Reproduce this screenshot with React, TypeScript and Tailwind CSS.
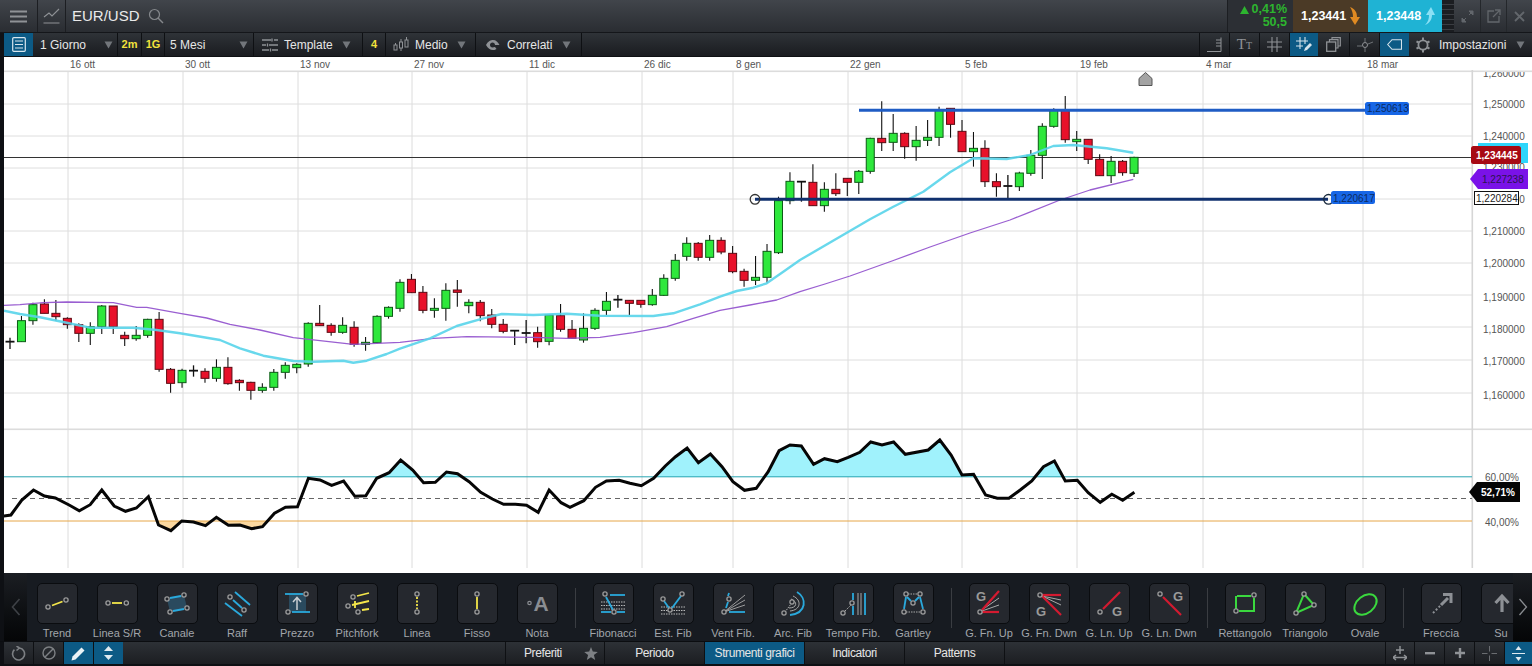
import React from "react";

type C = [string, number, number, number, number];
const seg8: C[] = [
  ["d",155,155,143,177],["g",92,155,78,155],["g",44,92,38,104],["r",42,70,28,70],["r",70,80,30,92],["r",85,104,82,116],["r",104,130,100,156],["g",110,130,97,165],["g",48,110,45,132],["r",48,110,48,132],["r",136,146,125,168],["g",136,146,108,152],["g",88,136,86,143],["r",88,238,66,245],["r",238,280,234,308],["g",241,278,236,293],["d",242,242,226,260],["r",244,265,235,278],["g",232,265,208,275],["r",232,281,202,284],["r",271,278,268,302],["r",277,301,275,329],["g",292,301,280,308],["g",247,292,237,302],["g",226,247,217,266],["g",223,233,220,250],["g",100,222,97,230],["r",100,107,45,108],["r",106,127,100,137],["g",106,127,82,131],["r",112,163,94,170],["g",157,163,141,182],["g",79,158,76,160],["g",52,79,49,86],
];
const seg9: C[] = [
  ["g",187,265,178,275],["r",178,218,162,218],["r",217,271,198,280],["g",265,271,235,293],["g",211,265,190,302],["r",210,217,180,260],["g",247,257,238,280],["r",247,287,240,304],["r",285,313,267,325],["r",313,334,297,340],["d",332,332,332,375],["d",339,339,300,370],["r",338,365,320,383],["g",285,364,285,376],["r",287,328,252,335],["r",328,355,300,356],["g",325,360,280,368],["g",271,325,265,330],["g",244,271,216,285],["d",239,239,225,263],["r",241,250,241,285],["r",241,253,241,263],["g",226,254,207,257],["g",175,226,163,228],["g",121,175,102,182],["g",70,109,52,122],["r",70,112,66,122],["g",61,112,45,122],["r",61,96,52,103],["r",100,155,78,160],["r",154,181,146,200],["g",172,181,108,195],["g",94,172,72,188],
];
const seg6: C[] = [
  ["g",332,488,320,492],["g",274,332,247,343],["d",275,275,275,335],["r",277,347,223,347],["g",298,347,277,365],["r",298,311,250,318],["r",265,277,265,318],["g",244,277,240,312],["g",145,244,143,251],["r",145,158,34,183],["g",130,157,72,183],["r",130,170,127,206],["g",151,170,108,212],["g",142,151,90,168],["g",60,142,50,168],["r",55,103,55,143],["r",124,185,90,185],["g",175,185,126,230],["r",175,275,151,291],["r",275,290,250,320],["d",288,288,255,325],["g",249,290,245,303],["g",196,250,180,257],["g",109,196,100,267],["g",60,109,55,113],["r",60,149,18,158],["g",148,155,123,183],["r",148,208,148,222],["r",208,257,193,257],["g",214,257,198,279],["r",214,248,210,257],["g",202,250,200,261],
];
const candles: C[] = [
  ...seg8.map((c): C => [c[0], 290 + c[1] / 3, 290 + c[2] / 3, 290 + c[3] / 3, 290 + c[4] / 3]),
  ...seg9.map((c): C => [c[0], 220 + c[1] / 3, 220 + c[2] / 3, 220 + c[3] / 3, 220 + c[4] / 3]),
  ...seg6.map((c): C => [c[0], 90 + c[1] / 3, 90 + c[2] / 3, 90 + c[3] / 3, 90 + c[4] / 3]),
];

const conv = (a: number[], ox: number, oy: number, sx = 3) => {
  const out: string[] = [];
  for (let i = 0; i < a.length; i += 2) out.push(`${(ox + a[i] / sx).toFixed(1)},${(oy + a[i + 1] / 3).toFixed(1)}`);
  return out;
};
const cyan = [
  ...conv([12,62,60,72,120,82,200,98,270,113,400,113,470,120,540,130,660,150,720,175,790,197,880,213,940,215,1030,212,1060,218,1100,212,1160,192,1200,176],0,290),
  ...conv([90,355,170,318,250,295,305,282,400,285,500,281,600,287,760,288,820,280,900,253,960,230,1010,213,1060,203,1100,190,1150,155,1200,120],400,220),
  ...conv([390,388,460,350,550,305,630,247,700,205,800,207,870,195,940,168,1000,165,1100,175,1180,188],740,90),
].join(" ");
const purple = [
  ...conv([12,46,60,44,130,38,200,36,340,38,410,52,440,52,540,70,620,84,690,103,780,120,880,143,960,152,1060,163,1200,157],0,290),
  ...conv([100,355,200,350,400,352,500,355,600,352,700,338,800,320,880,295,960,271,1050,255,1130,240,1200,215],400,220),
  "825,284","850,276","892,261","930,247","970,233",
  ...conv([810,390,860,370,960,330,1050,300,1180,268],740,90),
].join(" ");
const rsiPts = [
  ...conv([10,258,30,255,60,210,92,180,122,198,152,204,190,225,218,242,248,224,280,180,314,228,345,244,375,234,408,200,436,285,470,302,500,273,532,276,565,287,595,262,628,286,660,285,692,296,722,290,755,250,785,232,818,230,848,145,880,150,912,166,945,153,976,199,1006,197,1036,145,1070,128,1102,90,1135,120,1165,158,1197,157,1228,126,1258,131,1290,155,1322,187,1354,207,1385,223,1417,223,1448,226,1480,247,1510,180,1543,218],0,430,2.75),
  ...conv([0,232,38,212,70,172,100,153,135,151,165,160,196,167,230,145,262,108,290,80,322,54,353,98,386,72,418,110,448,155,480,181,512,175,545,125,575,62,605,45,636,48,670,103,700,86,735,95,765,82,797,67,827,36,858,45,890,36,922,73,985,60,1017,30,1048,75,1078,135,1110,133,1143,195,1175,205,1207,205,1238,180,1270,153,1302,110,1332,93,1362,153,1395,151,1425,188,1458,217,1490,193,1520,211,1552,187],570,430,2.75),
];
const rsi = rsiPts.join(" ");

const vGrid = [68, 183, 298, 412, 527, 642, 733, 848, 962, 1077, 1203, 1363];
const hGrid = [104, 136, 168, 199, 231, 263, 295, 327, 360, 393];
const dates: [number, string][] = [[70,"16 ott"],[185,"30 ott"],[300,"13 nov"],[414,"27 nov"],[529,"11 dic"],[644,"26 dic"],[736,"8 gen"],[850,"22 gen"],[965,"5 feb"],[1080,"19 feb"],[1206,"4 mar"],[1367,"18 mar"]];
const prices: [number, string][] = [[77,"1,260000"],[108,"1,250000"],[140,"1,240000"],[171,"1,230000"],[203,"1,220000"],[235,"1,210000"],[267,"1,200000"],[301,"1,190000"],[333,"1,180000"],[365,"1,170000"],[399,"1,160000"]];
const F = "'Liberation Sans', Arial, sans-serif";

function Chart() {
  return (
    <svg viewBox="4 57 1528 516" className="block w-[1528px] h-[516px] bg-white">
      <defs>
        <clipPath id="upper"><rect x="0" y="430" width="1472" height="47" /></clipPath>
        <clipPath id="lower"><rect x="0" y="521" width="1472" height="40" /></clipPath>
      </defs>
      {vGrid.map((x) => <line key={x} x1={x} x2={x} y1="70" y2="568" stroke="#dcdcdc" strokeWidth="1" />)}
      {hGrid.map((y) => <line key={y} x1="4" x2="1472" y1={y} y2={y} stroke="#dedede" strokeWidth="1" />)}
      <g fontSize="10" fill="#555" fontFamily={F}>
        {prices.map(([y, t]) => <text key={t} x="1483" y={y}>{t}</text>)}
        <text x="1485" y="481">60,00%</text>
        <text x="1485" y="526">40,00%</text>
      </g>
      <rect x="4" y="57" width="1528" height="14" fill="#fff" />
      <rect x="4" y="70.5" width="1528" height="1.6" fill="#dcdcdc" />
      <rect x="4" y="428.5" width="1528" height="1.6" fill="#dcdcdc" />
      <rect x="1471.5" y="70" width="1.6" height="498" fill="#d6d6d6" />
      <g fontSize="10" fill="#555" fontFamily={F}>
        {dates.map(([x, t]) => <text key={t} x={x} y="68">{t}</text>)}
      </g>
      <line x1="4" x2="1472" y1="157.5" y2="157.5" stroke="#333" strokeWidth="1" />
      {candles.map((c, i) => {
        const x = 10 + 11.47 * i;
        const dark = c[0] === "g" ? "#0c5a16" : "#5a0a12";
        if (c[0] === "d") {
          return (
            <g key={i} stroke="#111" strokeWidth="1.3">
              <line x1={x} x2={x} y1={c[3]} y2={c[4]} />
              <line x1={x - 4.5} x2={x + 4.5} y1={c[1]} y2={c[1]} strokeWidth="1.8" />
            </g>
          );
        }
        return (
          <g key={i}>
            <line x1={x} x2={x} y1={c[3]} y2={c[4]} stroke="#111" strokeWidth="1.1" />
            <rect x={x - 4} y={c[1]} width="8" height={Math.max(c[2] - c[1], 1)} fill={c[0] === "g" ? "#2ee83c" : "#e8112a"} stroke={dark} strokeWidth="1" />
          </g>
        );
      })}
      <polyline points={purple} fill="none" stroke="#9556cf" strokeWidth="1.3" strokeLinejoin="round" opacity="0.95" />
      <polyline points={cyan} fill="none" stroke="#58d4ea" strokeWidth="2.4" strokeLinejoin="round" opacity="0.9" />
      <line x1="859" x2="1365" y1="110.3" y2="110.3" stroke="#1f5cc4" strokeWidth="3" />
      <line x1="755" x2="1328" y1="199.3" y2="199.3" stroke="#10306e" strokeWidth="3" />
      <circle cx="755" cy="199.3" r="4.8" fill="none" stroke="#333" strokeWidth="1.3" />
      <circle cx="1328.5" cy="199.3" r="4.8" fill="none" stroke="#1a2a3c" strokeWidth="1.3" />
      <rect x="1365" y="102" width="44" height="13" rx="2.5" fill="#1766e6" />
      <text x="1367" y="112.3" fontSize="10" fill="#0c2b5f" fontFamily={F}>1,250613</text>
      <rect x="1331" y="191" width="44" height="13" rx="2.5" fill="#1766e6" />
      <text x="1333" y="201.5" fontSize="10" fill="#0c2b5f" fontFamily={F}>1,220617</text>
      <polygon points="1145.5,72.5 1152,78.5 1152,85.5 1139,85.5 1139,78.5" fill="#a3a3a3" stroke="#555" strokeWidth="1" />
      <rect x="1478" y="143" width="50" height="20" fill="#2ed5fb" />
      <rect x="1471" y="146" width="50" height="18" rx="2.5" fill="#a70a14" />
      <text x="1476" y="159" fontSize="10" fontWeight="700" fill="#fff" fontFamily={F}>1,234445</text>
      <polygon points="1470,179 1478,169 1528,169 1528,189 1478,189" fill="#7a12e8" />
      <text x="1482" y="183" fontSize="10" fill="#2c1450" fontFamily={F}>1,227238</text>
      <rect x="1474.5" y="191.5" width="44" height="13" fill="#fff" stroke="#111" strokeWidth="1" />
      <text x="1476" y="202" fontSize="10" fill="#222" fontFamily={F}>1,220284</text>
      <polygon points={`4,521 ${rsi} 1134,521`} fill="#fbd8a0" clipPath="url(#lower)" />
      <polygon points={`4,477 ${rsi} 1134,477`} fill="#a0f2fc" clipPath="url(#upper)" />
      <line x1="4" x2="1472" y1="476.8" y2="476.8" stroke="#2aa5b2" strokeWidth="1" />
      <line x1="4" x2="1472" y1="521" y2="521" stroke="#e6a648" strokeWidth="1" />
      <line x1="12" x2="1472" y1="498.5" y2="498.5" stroke="#666" strokeWidth="1" strokeDasharray="5 4" />
      <polyline points={rsi} fill="none" stroke="#060606" strokeWidth="3" strokeLinejoin="miter" />
      <polygon points="1469,492 1477,482 1520,482 1520,502 1477,502" fill="#050505" />
      <text x="1481" y="496" fontSize="10" fontWeight="700" fill="#fff" fontFamily={F}>52,71%</text>
    </svg>
  );
}

const Tri = ({ className = "" }: { className?: string }) => (
  <svg viewBox="0 0 9 8" className={`w-[9px] h-[8px] ${className}`}><polygon points="0.5,0.5 8.5,0.5 4.5,7.5" fill="#72767b" /></svg>
);

const Dot = ({ x, y, r = 2.1 }: { x: number; y: number; r?: number }) => (
  <circle cx={x} cy={y} r={r} fill="#24272d" stroke="#9c9c9c" strokeWidth="1.3" />
);
const Y = "#f4e64a", B = "#2aa9dc", R = "#d41a30", G = "#3ad83e", GR = "#a8a8a8";
const L = ({ a, b, c = B, w = 1.8, d }: { a: number[]; b: number[]; c?: string; w?: number; d?: string }) => (
  <line x1={a[0]} y1={a[1]} x2={b[0]} y2={b[1]} stroke={c} strokeWidth={w} strokeDasharray={d} />
);
const GLet = ({ x, y }: { x: number; y: number }) => (
  <text x={x} y={y} fontSize="13" fontWeight="700" fill="#9a9a9a" textAnchor="middle" fontFamily={F}>G</text>
);

const tools: Record<string, React.ReactNode> = {
  "Trend": <><L a={[15,22.5]} b={[25.5,18.5]} c={Y} /><Dot x={11} y={24} /><Dot x={29} y={17} /></>,
  "Linea S/R": <><L a={[15,20]} b={[25,20]} c={Y} /><Dot x={11} y={20} /><Dot x={29.3} y={20} /></>,
  "Canale": <><polygon points="10,16 27,12 30,25 13,29" fill="#2a4a5e" /><L a={[13,15]} b={[24,13]} /><L a={[16,28]} b={[27,26]} /><Dot x={10} y={16} /><Dot x={27} y={12} /><Dot x={13} y={29} /><Dot x={30} y={25} /></>,
  "Raff": <><L a={[18,9]} b={[33,22]} /><L a={[16,17]} b={[25,25]} /><L a={[8,20]} b={[25,33]} /><Dot x={13} y={14} /><Dot x={27} y={27} /></>,
  "Prezzo": <><rect x="12" y="11" width="17" height="18" fill="#2a4a5e" /><L a={[8,11]} b={[26,11]} /><L a={[15,29]} b={[33,29]} /><path d="M20 27 V15 M16 19 L20 14.5 L24 19" fill="none" stroke="#c8ced2" strokeWidth="1.5" /><Dot x={29} y={11} /><Dot x={11} y={29} /></>,
  "Pitchfork": <><L a={[20,13]} b={[32,10]} c={Y} /><L a={[15,22]} b={[32,18]} c={Y} /><L a={[25,27]} b={[32,26]} c={Y} /><L a={[18,18]} b={[18,25]} c={Y} /><Dot x={16} y={14} /><Dot x={11} y={23} /><Dot x={21} y={29} /></>,
  "Linea": <><L a={[20,14]} b={[20,26]} c={Y} d="2 1.5" /><Dot x={20} y={11} /><Dot x={20} y={29} /></>,
  "Fisso": <><L a={[20,14]} b={[20,26]} c={Y} /><Dot x={20} y={11} /><Dot x={20} y={29} /></>,
  "Nota": <><circle cx="12.5" cy="20" r="1.7" fill="none" stroke="#8a8d92" strokeWidth="1.2" /><text x="24" y="28" textAnchor="middle" fontSize="21" fontWeight="700" fill="#8a8d92" fontFamily={F}>A</text></>,
  "Fibonacci": <><L a={[17,12]} b={[32,12]} /><L a={[8,29]} b={[18,29]} /><L a={[24,29]} b={[32,29]} />{[19,22.5,26].map((y) => <L key={y} a={[8,y]} b={[32,y]} c="#c8c8c8" w={0.9} d="1.5 1" />)}<L a={[13,14]} b={[20,27]} /><Dot x={12} y={11} /><Dot x={21} y={29} /></>,
  "Est. Fib": <>{[24,27.5,31].map((y) => <L key={y} a={[8,y]} b={[32,y]} c="#c8c8c8" w={0.9} d="1.5 1" />)}<L a={[11,18]} b={[16,25]} /><L a={[19,25]} b={[28,13]} /><Dot x={10} y={16} /><Dot x={17} y={27} /><Dot x={29} y={11} /></>,
  "Vent Fib.": <><L a={[11,29]} b={[32,12]} c={GR} w={0.9} /><L a={[11,29]} b={[32,17]} c={GR} w={0.9} /><L a={[11,29]} b={[32,22]} c={GR} w={0.9} /><L a={[16,29]} b={[32,29]} /><L a={[16,10]} b={[15,13]} /><L a={[15,19]} b={[13,25]} /><Dot x={16} y={16} /><Dot x={11} y={29} /></>,
  "Arc. Fib": <><path d="M24 9 C34 15 34 30 17 32" fill="none" stroke={B} strokeWidth="1.9" /><path d="M20 13 C29 17 28 27 17 28" fill="none" stroke={GR} strokeWidth="1" /><path d="M18 16 C25 19 24 25 16 25" fill="none" stroke={GR} strokeWidth="1" /><L a={[12,29]} b={[18,21]} d="1.5 1" c={GR} w={1} /><Dot x={11} y={30} /><Dot x={19} y={19} /></>,
  "Tempo Fib.": <><L a={[20,10]} b={[20,17]} /><L a={[20,23]} b={[20,32]} /><L a={[25,10]} b={[25,32]} c={GR} w={1} /><L a={[28,10]} b={[28,32]} c={GR} w={1} /><L a={[32,10]} b={[32,32]} /><L a={[12,28]} b={[18,22]} c={GR} w={1} d="1.5 1" /><Dot x={10} y={30} /><Dot x={19} y={20} /></>,
  "Gartley": <><L a={[15,11]} b={[25,11]} c={GR} w={1} d="1.5 1" /><L a={[13,29]} b={[28,29]} c={GR} w={1} d="1.5 1" /><L a={[13,14]} b={[11,26]} /><L a={[14,14]} b={[18,18]} /><L a={[26,14]} b={[22,18]} /><L a={[27,14]} b={[30,26]} /><Dot x={13} y={11} /><Dot x={27} y={11} /><Dot x={20} y={20} /><Dot x={11} y={29} /><Dot x={30} y={29} /></>,
  "G. Fn. Up": <><L a={[13,27]} b={[30,15]} c={GR} w={1} /><L a={[13,28]} b={[30,22]} c={GR} w={1} /><L a={[13,27]} b={[30,8]} c={R} w={2.2} /><L a={[13,29]} b={[30,29]} c={R} w={2.2} /><Dot x={11} y={29} /><GLet x={12} y={18} /></>,
  "G. Fn. Dwn": <><L a={[13,13]} b={[32,17]} c={GR} w={1} /><L a={[13,13]} b={[32,22]} c={GR} w={1} /><L a={[13,12]} b={[32,12]} c={R} w={2.2} /><L a={[13,13]} b={[32,32]} c={R} w={2.2} /><Dot x={11} y={12} /><GLet x={12} y={33} /></>,
  "G. Ln. Up": <><L a={[14,26]} b={[31,9]} c={R} w={2.2} /><Dot x={11} y={29} /><GLet x={28} y={33} /></>,
  "G. Ln. Dwn": <><L a={[14,14]} b={[32,32]} c={R} w={2.2} /><Dot x={11} y={11} /><GLet x={29} y={18} /></>,
  "Rettangolo": <><path d="M12 13 H26 M29 15 V28 H14 M11 26 V13" fill="none" stroke={G} strokeWidth="2" /><Dot x={11} y={28} /><Dot x={29} y={12} /></>,
  "Triangolo": <><polygon points="19,11 29,22 11,30" fill="none" stroke={G} strokeWidth="2" /><Dot x={19} y={11} /><Dot x={29} y={22} /><Dot x={11} y={30} /></>,
  "Ovale": <ellipse cx="20.5" cy="21.5" rx="12.5" ry="8.5" transform="rotate(-38 20.5 21.5)" fill="none" stroke={G} strokeWidth="2" />,
  "Freccia": <><L a={[12,30]} b={[22,20]} c="#8d9095" w={2} d="2 2" /><path d="M20 22 L27 15 M22 11.5 H30 V20" fill="none" stroke="#8d9095" strokeWidth="3" /></>,
  "Su": <path d="M21 29 V15 M14.5 20 L21 13 L27.5 20" fill="none" stroke="#8d9095" strokeWidth="3.2" />,
};

const groups = [
  ["Trend","Linea S/R","Canale","Raff","Prezzo","Pitchfork","Linea","Fisso","Nota"],
  ["Fibonacci","Est. Fib","Vent Fib.","Arc. Fib","Tempo Fib.","Gartley"],
  ["G. Fn. Up","G. Fn. Dwn","G. Ln. Up","G. Ln. Dwn"],
  ["Rettangolo","Triangolo","Ovale"],
  ["Freccia","Su"],
];

function Tool({ name }: { name: string }) {
  return (
    <div className="w-[60px] shrink-0 flex flex-col items-center pt-[10px]">
      <div className="w-[41px] h-[41px] rounded-[5px] bg-[#25282e] border border-[#0a0c0f]">
        <svg viewBox="0 0 41 41" className="block -m-px w-[41px] h-[41px]">{tools[name]}</svg>
      </div>
      <span className="mt-[3px] text-[11px] leading-[13px] text-[#a2a6ab] whitespace-nowrap">{name}</span>
    </div>
  );
}

function Cell({ w, children, cls = "", sep = true }: { w: string; children?: React.ReactNode; cls?: string; sep?: boolean }) {
  return <div className={`${w} h-full shrink-0 flex items-center ${sep ? "border-r border-[#0e1013]" : ""} ${cls}`}>{children}</div>;
}

const IC = "#8f9296";

export default function App() {
  return (
    <div style={{ fontFamily: F }} className="w-[1532px] h-[666px] overflow-hidden flex flex-col bg-[#0e1014] text-[12px] text-[#e6e6e6]">
      {/* top bar */}
      <div className="h-[33px] shrink-0 flex items-center bg-gradient-to-b from-[#41454b] to-[#2a2d32] border-b border-[#14161a]">
        <div className="w-[38px] h-full flex items-center justify-center border-r border-[#1c1e22]">
          <svg width="17" height="13" viewBox="0 0 17 13"><path d="M0 1.5H17M0 6.5H17M0 11.5H17" stroke="#8f9296" strokeWidth="2" /></svg>
        </div>
        <div className="w-[28px] h-full flex items-center justify-center border-r border-[#1c1e22]">
          <svg width="17" height="16" viewBox="0 0 17 16"><path d="M1 9 L6 5 L9 8 L16 1 M0.5 15 H16.5" fill="none" stroke="#8f9296" strokeWidth="1.1" /></svg>
        </div>
        <span className="ml-[6px] text-[15px] text-[#eaeaea]">EUR/USD</span>
        <svg width="16" height="16" viewBox="0 0 16 16" className="ml-[8px]"><circle cx="6.5" cy="6.5" r="5" fill="none" stroke="#85888c" strokeWidth="1.2" /><path d="M10 10 L15 15" stroke="#85888c" strokeWidth="1.4" /></svg>
        <div className="flex-1" />
        <div className="w-[66px] h-full flex flex-col items-end justify-center pr-[6px] bg-[#2c2f34] border-l border-[#1c1e22] leading-[13px] font-bold text-[12.5px] text-[#2db52f]">
          <span className="flex items-center gap-[3px]"><svg width="9" height="8" viewBox="0 0 9 8"><polygon points="4.5,0 9,8 0,8" fill="#2db52f" /></svg>0,41%</span>
          <span>50,5</span>
        </div>
        <div className="w-[75px] h-full flex items-center pl-[8px] gap-[3px] bg-[#4b3a26] font-bold text-white text-[12.5px]">
          1,23441
          <svg width="11" height="18" viewBox="0 0 11 18"><path d="M1 0 C6 2 8 5 8 10 H11 L6 18 L1 10 H4 C4 6 3 3 1 0 Z" fill="#e08a22" /></svg>
        </div>
        <div className="w-[74px] h-full flex items-center pl-[8px] gap-[3px] bg-[#1fb3d4] font-bold text-white text-[12.5px]">
          1,23448
          <svg width="11" height="18" viewBox="0 0 11 18"><path d="M1 18 C4 15 5 12 5 8 H2 L7 0 L11 8 H8 C8 12 6 16 1 18 Z" fill="#8be0f5" /></svg>
        </div>
        <div className="w-[12px] h-full bg-[repeating-linear-gradient(180deg,#1b1d21_0px,#1b1d21_4px,#3a3d42_4px,#3a3d42_5px)]" />
        <div className="w-[27px] h-full flex items-center justify-center border-r border-[#24272b]">
          <svg width="13" height="13" viewBox="0 0 13 13"><path d="M8 1 H12 V5 Z M5 12 H1 V8 Z M11 2 L8 5 M2 11 L5 8" fill="#63676c" stroke="#63676c" /></svg>
        </div>
        <div className="w-[26px] h-full flex items-center justify-center border-r border-[#24272b]">
          <svg width="14" height="14" viewBox="0 0 14 14"><path d="M7 2 H1 V13 H12 V7 M8 1 H13 V6 M13 1 L6 8" fill="none" stroke="#63676c" strokeWidth="1.3" /></svg>
        </div>
        <div className="w-[25px] h-full flex items-center justify-center">
          <svg width="11" height="11" viewBox="0 0 11 11"><path d="M1 1 L10 10 M10 1 L1 10" stroke="#63676c" strokeWidth="1.8" /></svg>
        </div>
      </div>

      {/* toolbar */}
      <div className="h-[24px] shrink-0 flex items-center bg-gradient-to-b from-[#2f3338] to-[#1a1c20] border-b border-[#0e1013]">
        <div className="w-[4px] h-full bg-[#101216]" />
        <div className="w-[29px] h-full flex items-center justify-center bg-[#0c5a85]">
          <svg width="14" height="15" viewBox="0 0 14 15"><rect x="0.7" y="0.7" width="12.6" height="13.6" rx="1" fill="none" stroke="#d8e6ee" strokeWidth="1.2" /><path d="M3 4 H11 M3 7.5 H11 M3 11 H11" stroke="#d8e6ee" strokeWidth="1.1" /></svg>
        </div>
        <Cell w="w-[85px]" cls="pl-[7px] justify-between pr-[4px]"><span>1 Giorno</span><Tri /></Cell>
        <Cell w="w-[24px]" cls="justify-center"><span className="text-[11px] font-bold text-[#f2e23c]">2m</span></Cell>
        <Cell w="w-[23px]" cls="justify-center"><span className="text-[11px] font-bold text-[#f2e23c]">1G</span></Cell>
        <Cell w="w-[89px]" cls="pl-[5px] justify-between pr-[5px]"><span>5 Mesi</span><Tri /></Cell>
        <Cell w="w-[109px]" cls="pl-[8px]">
          <svg width="16" height="14" viewBox="0 0 16 14" className="mr-[6px]"><path d="M0 2 H9 M12 2 H16 M0 7 H4 M7 7 H16 M0 12 H7 M10 12 H16 M10 0.5 V3.5 M5.5 5.5 V8.5 M8.5 10.5 V13.5" stroke={IC} strokeWidth="1.3" fill="none" /></svg>
          <span>Template</span><Tri className="ml-[9px]" />
        </Cell>
        <Cell w="w-[23px]" cls="justify-center"><span className="text-[11px] font-bold text-[#f2e23c]">4</span></Cell>
        <Cell w="w-[90px]" cls="pl-[7px]">
          <svg width="16" height="15" viewBox="0 0 16 15" className="mr-[6px]"><path d="M2.5 6V8 M8 2V5 M13.5 0V3 M8 11V14" stroke={IC} /><rect x="1" y="8" width="3" height="5" fill="none" stroke={IC} /><rect x="6.5" y="5" width="3" height="6" fill="none" stroke={IC} /><rect x="12" y="3" width="3" height="7" fill="none" stroke={IC} /></svg>
          <span>Medio</span><Tri className="ml-[9px]" />
        </Cell>
        <Cell w="w-[106px]" cls="pl-[9px]">
          <svg width="15" height="12" viewBox="0 0 15 12" className="mr-[7px]"><path d="M1 6 C3 2 6 1 8 1 C11 1 13 3 14.5 6 L10 6 C10 4.5 9 3.5 7.5 3.5 C6 3.5 5 4.5 5 6 C5 7.5 6 8.5 7.5 8.5 L10 8 L11.5 10 C10 11 9 11 8 11 C5 11 3 9.5 1 6 Z" fill={IC} /></svg>
          <span>Correlati</span><Tri className="ml-[10px]" />
        </Cell>
        <div className="flex-1" />
        <div className="w-px h-full bg-[#0e1013]" />
        <Cell w="w-[30px]" cls="justify-center">
          <svg width="16" height="15" viewBox="0 0 16 15"><path d="M0 14.5 H14 V0.5 M9 3 H14 M9 6 H14 M9 9 H14" fill="none" stroke={IC} /></svg>
        </Cell>
        <Cell w="w-[30px]" cls="justify-center">
          <span style={{ fontFamily: "'Liberation Serif', serif" }} className="text-[#8f9296] text-[15px]">T<span className="text-[10px]">T</span></span>
        </Cell>
        <Cell w="w-[30px]" cls="justify-center">
          <svg width="15" height="15" viewBox="0 0 15 15"><path d="M5 0 V15 M10 0 V15 M0 5 H15 M0 10 H15" stroke={IC} strokeWidth="1.1" /></svg>
        </Cell>
        <Cell w="w-[28px]" cls="justify-center bg-[#0c5a85]" sep={false}>
          <svg width="17" height="16" viewBox="0 0 17 16"><path d="M4 0 V12 M9 0 V7 M0 4 H12 M0 9 H7" stroke="#d5e4ec" strokeWidth="1.1" /><path d="M9 11 L14 6 L16 8 L11 13 L8 14 Z" fill="#d5e4ec" /></svg>
        </Cell>
        <Cell w="w-[32px]" cls="justify-center">
          <svg width="15" height="15" viewBox="0 0 15 15"><rect x="0.7" y="5" width="9" height="9.3" fill="none" stroke={IC} strokeWidth="1.3" /><path d="M3.5 5 V2.7 H12 V11 H10 M6 2.7 V0.7 H14.3 V9 H12" fill="none" stroke={IC} strokeWidth="1.2" /></svg>
        </Cell>
        <Cell w="w-[30px]" cls="justify-center">
          <svg width="16" height="14" viewBox="0 0 16 14"><path d="M0 8 H5 M11 6 L16 4 M8 0 V4 M8 10 V14" stroke="#6f7377" /><circle cx="8" cy="7" r="2.5" fill="none" stroke={IC} /></svg>
        </Cell>
        <Cell w="w-[29px]" cls="justify-center bg-[#0c5a85]" sep={false}>
          <svg width="15" height="11" viewBox="0 0 15 11"><path d="M14.5 0.7 H5 L0.7 5.5 L5 10.3 H14.5 Z" fill="none" stroke="#d5e4ec" strokeWidth="1.1" /></svg>
        </Cell>
        <div className="w-[123px] h-full shrink-0 flex items-center pl-[6px]">
          <svg width="16" height="16" viewBox="0 0 16 16" className="mr-[8px]"><circle cx="8" cy="8" r="4.6" fill="none" stroke={IC} strokeWidth="1.8" /><path d="M8 0.5 V3 M8 13 V15.5 M1.5 4.3 L3.7 5.5 M12.3 10.5 L14.5 11.7 M1.5 11.7 L3.7 10.5 M12.3 5.5 L14.5 4.3" stroke={IC} strokeWidth="2" /></svg>
          <span className="text-[12px] whitespace-nowrap">Impostazioni</span><Tri className="ml-[10px]" />
        </div>
      </div>

      {/* chart */}
      <div className="h-[516px] shrink-0 flex">
        <div className="w-[4px] bg-[#0e1014]" />
        <Chart />
      </div>

      {/* drawing tools */}
      <div className="h-[69px] shrink-0 flex bg-[#171b21] border-b border-[#0b0d10]">
        <div className="w-[27px] shrink-0 flex">
          <div className="w-[4px] bg-[#0e1014]" />
          <div className="flex-1 flex items-center justify-center bg-gradient-to-b from-[#1b1e23] to-[#050607]">
            <svg width="10" height="18" viewBox="0 0 10 18"><path d="M8.5 1 L1.5 9 L8.5 17" fill="none" stroke="#3e4146" strokeWidth="1.6" /></svg>
          </div>
        </div>
        <div className="flex-1 flex overflow-hidden">
          {groups.map((g, i) => (
            <React.Fragment key={i}>
              {i > 0 && <div className="w-[16px] shrink-0 flex justify-center pt-[15px]"><div className="w-px h-[40px] bg-[#3a3d42]" /></div>}
              {g.map((n) => <Tool key={n} name={n} />)}
            </React.Fragment>
          ))}
        </div>
        <div className="w-[19px] shrink-0 flex items-center justify-center bg-gradient-to-b from-[#1b1e23] to-[#050607]">
          <svg width="10" height="18" viewBox="0 0 10 18"><path d="M1.5 1 L8.5 9 L1.5 17" fill="none" stroke="#8a8d91" strokeWidth="1.3" /></svg>
        </div>
      </div>

      {/* bottom bar */}
      <div className="h-[22px] shrink-0 flex items-center bg-gradient-to-b from-[#2d3136] to-[#1c1e22]">
        <div className="w-[4px] h-full bg-[#0e1014]" />
        <Cell w="w-[30px]" cls="justify-center">
          <svg width="15" height="15" viewBox="0 0 15 15"><path d="M3.4 3.6 A6 6 0 1 0 8.5 2 M8.5 2 L5.5 0 M8.5 2 L5.5 4.5" fill="none" stroke="#7d8084" strokeWidth="1.6" /></svg>
        </Cell>
        <Cell w="w-[30px]" cls="justify-center">
          <svg width="14" height="14" viewBox="0 0 14 14"><circle cx="7" cy="7" r="6" fill="none" stroke="#7d8084" strokeWidth="1.4" /><path d="M3 11 L11 3" stroke="#7d8084" strokeWidth="1.4" /></svg>
        </Cell>
        <Cell w="w-[30px]" cls="justify-center bg-[#0c5a85]">
          <svg width="15" height="15" viewBox="0 0 15 15"><path d="M0.5 14.5 L1.5 10.5 L10.5 1.5 L13.5 4.5 L4.5 13.5 Z" fill="#eaf2f6" /></svg>
        </Cell>
        <Cell w="w-[29px]" cls="justify-center bg-[#0c5a85]" sep={false}>
          <svg width="11" height="14" viewBox="0 0 11 14"><polygon points="5.5,0 10,5 1,5" fill="#dfeaf0" /><polygon points="1,9 10,9 5.5,14" fill="#dfeaf0" /></svg>
        </Cell>
        <div className="w-[382px] h-full shrink-0" />
        <Cell w="w-[100px]" cls="pl-[18px] justify-between pr-[6px] border-l tracking-[-0.4px]"><span>Preferiti</span>
          <svg width="14" height="13" viewBox="0 0 14 13"><polygon points="7,0 8.8,4.6 13.8,4.9 9.9,8 11.2,13 7,10.2 2.8,13 4.1,8 0.2,4.9 5.2,4.6" fill="#7d8084" /></svg>
        </Cell>
        <Cell w="w-[100px]" cls="justify-center tracking-[-0.4px]"><span>Periodo</span></Cell>
        <Cell w="w-[100px]" cls="justify-center bg-[#0c5a85] tracking-[-0.4px]"><span>Strumenti grafici</span></Cell>
        <Cell w="w-[100px]" cls="justify-center tracking-[-0.4px]"><span>Indicatori</span></Cell>
        <Cell w="w-[100px]" cls="justify-center tracking-[-0.4px]"><span>Patterns</span></Cell>
        <div className="flex-1" />
        <Cell w="w-[30px]" cls="justify-center border-l">
          <svg width="14" height="15" viewBox="0 0 14 15"><path d="M7 0 V8 M3 4 H11 M0 11.5 H14 M0 11.5 L3 9 M0 11.5 L3 14 M14 11.5 L11 9 M14 11.5 L11 14" stroke="#8f9296" strokeWidth="1.5" fill="none" /></svg>
        </Cell>
        <Cell w="w-[30px]" cls="justify-center"><svg width="10" height="3" viewBox="0 0 10 3"><rect width="10" height="2.4" fill="#8f9296" /></svg></Cell>
        <Cell w="w-[30px]" cls="justify-center"><svg width="10" height="10" viewBox="0 0 10 10"><path d="M5 0 V10 M0 5 H10" stroke="#8f9296" strokeWidth="2.4" /></svg></Cell>
        <Cell w="w-[30px]" cls="justify-center"><svg width="15" height="15" viewBox="0 0 15 15"><path d="M7.5 0 V5.5 M7.5 9.5 V15 M0 7.5 H5.5 M9.5 7.5 H15" stroke="#6a6d71" /></svg></Cell>
        <Cell w="w-[27px]" cls="justify-center bg-[#0c5a85]" sep={false}>
          <svg width="13" height="15" viewBox="0 0 13 15"><path d="M0 7.5 H13" stroke="#dfeaf0" /><polygon points="6.5,0 9.5,4 3.5,4" fill="#dfeaf0" /><polygon points="3.5,11 9.5,11 6.5,15" fill="#dfeaf0" /></svg>
        </Cell>
      </div>
    </div>
  );
}
